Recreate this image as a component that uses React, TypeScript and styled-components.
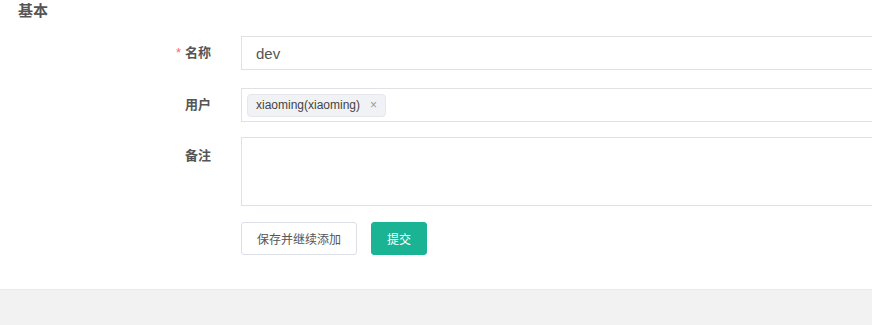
import React from "react";
import styled, { createGlobalStyle } from "styled-components";

const GlobalStyle = createGlobalStyle`
  html, body {
    margin: 0;
    padding: 0;
    background: #f2f2f2;
    font-family: "Liberation Sans", "Noto Sans CJK SC", sans-serif;
  }
`;

const Page = styled.div`
  width: 872px;
  height: 325px;
  overflow: hidden;
  background: #f2f2f2;
`;

const Panel = styled.div`
  background: #fff;
  height: 290px;
  border-bottom: 1px solid #e8e8ee;
  box-sizing: border-box;
  padding-top: 1px;
`;

const SectionTitle = styled.h3`
  margin: 0 0 0 18px;
  font-size: 15px;
  line-height: 20px;
  font-weight: bold;
  color: #555;
`;

const Form = styled.div`
  margin-top: 15px;
`;

const Row = styled.div<{ gap: number }>`
  display: flex;
  align-items: flex-start;
  margin-bottom: ${({ gap }) => gap}px;
`;

const Label = styled.label<{ top?: number }>`
  width: 241px;
  flex-shrink: 0;
  box-sizing: border-box;
  padding-right: 30px;
  padding-top: ${({ top }) => top ?? 0}px;
  text-align: right;
  font-size: 13px;
  font-weight: bold;
  line-height: 34px;
  color: #555;
`;

const Required = styled.span`
  color: #f56c6c;
  font-weight: normal;
  margin-right: 4px;
`;

const Field = styled.div<{ h: number }>`
  flex: 1;
  height: ${({ h }) => h}px;
  box-sizing: border-box;
  border: 1px solid #dfe1e5;
  border-right: none;
  display: flex;
  align-items: center;
  padding-left: 14px;
  font-size: 15px;
  color: #555;
`;

const TagField = styled(Field)`
  padding-left: 5px;
`;

const Tag = styled.span`
  display: inline-flex;
  align-items: center;
  height: 23px;
  box-sizing: border-box;
  padding: 0 8px;
  background: #f0f2f5;
  border: 1px solid #e6e7ea;
  border-radius: 4px;
  font-size: 12px;
  color: #444;
`;

const TagClose = styled.span`
  margin-left: 10px;
  font-size: 12px;
  color: #999;
`;

const Actions = styled.div`
  display: flex;
  gap: 14px;
  padding-left: 241px;
`;

const Button = styled.button<{ primary?: boolean }>`
  height: 33px;
  box-sizing: border-box;
  padding: 0 15px;
  border-radius: 3px;
  font-family: inherit;
  font-size: 12px;
  cursor: pointer;
  border: 1px solid ${({ primary }) => (primary ? "#1ab394" : "#dcdfe6")};
  background: ${({ primary }) => (primary ? "#1ab394" : "#fff")};
  color: ${({ primary }) => (primary ? "#fff" : "#555")};
`;

export default function App() {
  return (
    <Page>
      <GlobalStyle />
      <Panel>
        <SectionTitle>基本</SectionTitle>
        <Form>
          <Row gap={18}>
            <Label>
              <Required>*</Required>名称
            </Label>
            <Field h={34}>dev</Field>
          </Row>
          <Row gap={15}>
            <Label>用户</Label>
            <TagField h={34}>
              <Tag>
                xiaoming(xiaoming)
                <TagClose>×</TagClose>
              </Tag>
            </TagField>
          </Row>
          <Row gap={16}>
            <Label top={2}>备注</Label>
            <Field h={69} />
          </Row>
          <Actions>
            <Button>保存并继续添加</Button>
            <Button primary>提交</Button>
          </Actions>
        </Form>
      </Panel>
    </Page>
  );
}
